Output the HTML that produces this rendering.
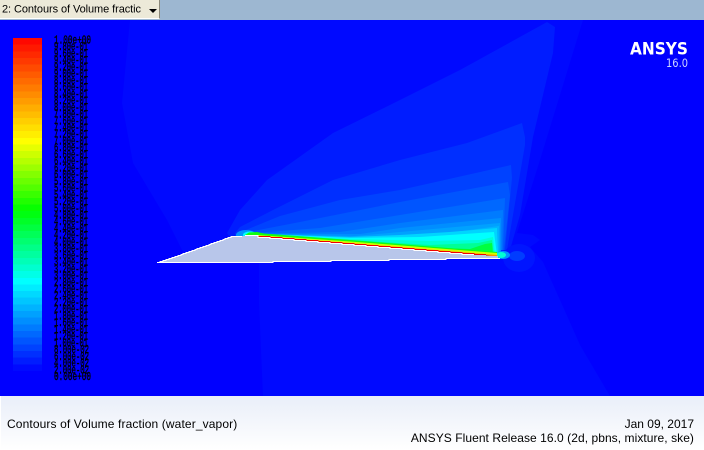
<!DOCTYPE html>
<html><head><meta charset="utf-8"><title>Contours of Volume fraction</title>
<style>
html,body{margin:0;padding:0;background:#00f}
body{width:704px;height:450px;position:relative;overflow:hidden;font-family:"Liberation Sans",sans-serif}
#bar{position:absolute;left:0;top:0;width:704px;height:20px;background:#9db7d1}
#btn{position:absolute;left:0;top:-1px;width:159px;height:19px;background:#ece9d8;border-right:1px solid #8a8778;border-bottom:1px solid #fff}
#btn svg{position:absolute;left:0;top:0}
#arr{position:absolute;left:149px;top:10px;width:0;height:0;border-left:4px solid transparent;border-right:4px solid transparent;border-top:4px solid #000}
#plot{position:absolute;left:0;top:20px}
#foot{position:absolute;left:0;top:396px;width:704px;height:54px;background:linear-gradient(#e9eef9,#fff);border-left:1px solid #fff;box-sizing:border-box;font-size:12px;color:#000}
#foot div{position:absolute;white-space:nowrap}
</style></head><body>
<div id="bar"></div>
<div id="btn"><svg width="145" height="19"><text x="2" y="13.5" font-family="'Liberation Sans',sans-serif" font-size="11" fill="#000" textLength="139" lengthAdjust="spacing">2: Contours of Volume fractic</text></svg><div id="arr"></div></div>
<svg id="plot" width="704" height="376" viewBox="0 20 704 376" xmlns="http://www.w3.org/2000/svg">
<rect x="0" y="20" width="704" height="376" fill="#00f"/>
<g stroke="none">
<polygon fill="hsl(237.8,100%,50%)" points="130,20 122,103 133,163 167,220 182,250 190,262 259,262 259,300 261,350 263,396 610,396 580,345 560,300 543,262 530,247 540,240 533,235 517,233 540,160 583,20"/>
<polygon fill="hsl(233.3,100%,50%)" points="227,233 240,210 267,180 333,133 400,100 460,70 547,22 555,27 553,53 533,137 520,215 510,250 400,260 235,245"/>
<polygon fill="hsl(228.9,100%,50%)" points="235,233 240,227 273,210 333,180 400,160 467,143 522,123 525,137 525,145 513,215 507,250 400,260 235,245"/>
<polygon fill="hsl(224.4,100%,50%)" points="236,234 280,216 340,200 400,190 511,165 512,178 505,250 400,260 236,245"/>
<polygon fill="hsl(220,100%,50%)" points="238,234 300,222 400,202 508,182 510,195 504,250 400,260 238,245"/>
<polygon fill="hsl(215.5,100%,50%)" points="240,234 320,228 400,215 505,198 503,250 400,260 240,245"/>
<polygon fill="hsl(211.1,100%,50%)" points="245,234 340,232 400,223 503,210 502,250 400,260 245,245"/>
<polygon fill="hsl(206.6,100%,50%)" points="250,234 360,234 400,228 501,218 501,252 400,260 250,245"/>
<polygon fill="hsl(202.2,100%,50%)" points="252,234 355,236 400,232 500,223 500,252 400,260 252,245"/>
<polygon fill="hsl(197.8,100%,50%)" points="254,234 370,238 440,234 499,226 499,253 400,260 254,245"/>
<polygon fill="hsl(190,100%,50%)" points="258,234 350,237 400,235 450,232 497,228 498,254 400,260 258,245"/>
<polygon fill="hsl(180,100%,50%)" points="262,234 350,238 420,237 494,232 497,255 400,260 262,245"/>
<polygon fill="hsl(170,100%,50%)" points="262,235 350,239 430,241 480,240 493,237 495,255 400,260 262,245"/>
<polygon fill="hsl(155,100%,50%)" points="265,235 350,240 430,245 478,243 492,240 494,255 400,260 265,245"/>
<polygon fill="hsl(135,100%,50%)" points="270,236 350,241 425,247.5 470,249 485,244 492,243 493,255 400,260 270,245"/>
<ellipse cx="519" cy="258" rx="16" ry="14" fill="hsl(235,100%,50%)"/>
<ellipse cx="517" cy="256" rx="8" ry="5" fill="hsl(226,100%,50%)"/>
<ellipse cx="503" cy="255" rx="7" ry="4" fill="hsl(205,100%,50%)"/>
<ellipse cx="501" cy="255" rx="5" ry="3" fill="hsl(170,100%,50%)"/>
<ellipse cx="246" cy="235" rx="10" ry="5" fill="hsl(205,100%,50%)"/>
<ellipse cx="250" cy="235" rx="7" ry="3.5" fill="hsl(180,100%,50%)"/>
<polygon fill="#10ff10" points="245,235 249,232.5 257,232 264,233.5 350,240 497,252 497,256 258,238"/>
<polygon fill="#d0ff00" points="258,235 350,241.5 497,253 497,256 258,238"/>
<polygon fill="#ff9000" points="258,236 350,243 497,255 497,256.5 258,238"/>
</g>
<path fill="#b8c6ea" shape-rendering="crispEdges" d="M157 262h3v-1h3v-1h3v-1h3v-1h3v-1h3v-1h3v-1h3v-1h2v-1h3v-1h3v-1h3v-1h3v-1h2v-1h3v-1h3v-1h3v-1h3v-1h2v-1h3v-1h3v-1h3v-1h3v-1h2v-1h3v-1h3v-1h11V236H258V237h12v1h12v1h12v1h12v1h12v1h12v1h12v1h12v1h12v1h12v1h12v1h12v1h12v1h12v1h12v1h12v1h12v1h12v1h12v1h12V258H446V259H389V260H331V261H273V262Z"/>
<g fill="none" shape-rendering="crispEdges">
<path stroke="#f00000" stroke-width="1" d="M258 236.5h12v1h12v1h12v1h12v1h12v1h12v1h12v1h12v1h12v1h12v1h12v1h12v1h12v1h12v1h12v1h12v1h12v1h12v1h12"/>
<path stroke="#fff" stroke-width="1" d="M245 235.5h13v2h12v1h12v1h12v1h12v1h12v1h12v1h12v1h12v1h12v1h12v1h12v1h12v1h12v1h12v1h12v1h12v1h12v1h12"/>
<path stroke="#fff" stroke-width="1" d="M157 262.5h3v-1h3v-1h3v-1h3v-1h3v-1h3v-1h3v-1h3v-1h2v-1h3v-1h3v-1h3v-1h3v-1h2v-1h3v-1h3v-1h3v-1h3v-1h2v-1h3v-1h3v-1h3v-1h3v-1h2v-1h3v-1h3v-1h11"/>
<path stroke="#fff" stroke-width="1" d="M157 262.5h116v-1h58v-1h58v-1h57v-1h54"/>
</g>
<g shape-rendering="crispEdges">
<rect x="13" y="38" width="29" height="7" fill="hsl(1.9,100%,50%)"/>
<rect x="13" y="44.66" width="29" height="7" fill="hsl(5.8,100%,50%)"/>
<rect x="13" y="51.32" width="29" height="7" fill="hsl(9.7,100%,50%)"/>
<rect x="13" y="57.98" width="29" height="7" fill="hsl(13.5,100%,50%)"/>
<rect x="13" y="64.64" width="29" height="7" fill="hsl(17.4,100%,50%)"/>
<rect x="13" y="71.3" width="29" height="7" fill="hsl(21.3,100%,50%)"/>
<rect x="13" y="77.96" width="29" height="7" fill="hsl(25.2,100%,50%)"/>
<rect x="13" y="84.62" width="29" height="7" fill="hsl(29,100%,50%)"/>
<rect x="13" y="91.28" width="29" height="7" fill="hsl(32.9,100%,50%)"/>
<rect x="13" y="97.94" width="29" height="7" fill="hsl(36.8,100%,50%)"/>
<rect x="13" y="104.6" width="29" height="7" fill="hsl(40.6,100%,50%)"/>
<rect x="13" y="111.26" width="29" height="7" fill="hsl(44.5,100%,50%)"/>
<rect x="13" y="117.92" width="29" height="7" fill="hsl(48.4,100%,50%)"/>
<rect x="13" y="124.58" width="29" height="7" fill="hsl(52.3,100%,50%)"/>
<rect x="13" y="131.24" width="29" height="7" fill="hsl(56.1,100%,50%)"/>
<rect x="13" y="137.9" width="29" height="7" fill="hsl(60,100%,50%)"/>
<rect x="13" y="144.56" width="29" height="7" fill="hsl(65.8,100%,50%)"/>
<rect x="13" y="151.22" width="29" height="7" fill="hsl(71.7,100%,50%)"/>
<rect x="13" y="157.88" width="29" height="7" fill="hsl(77.5,100%,50%)"/>
<rect x="13" y="164.54" width="29" height="7" fill="hsl(83.3,100%,50%)"/>
<rect x="13" y="171.2" width="29" height="7" fill="hsl(89.2,100%,50%)"/>
<rect x="13" y="177.86" width="29" height="7" fill="hsl(95,100%,50%)"/>
<rect x="13" y="184.52" width="29" height="7" fill="hsl(100.8,100%,50%)"/>
<rect x="13" y="191.18" width="29" height="7" fill="hsl(106.7,100%,50%)"/>
<rect x="13" y="197.84" width="29" height="7" fill="hsl(112.5,100%,50%)"/>
<rect x="13" y="204.5" width="29" height="7" fill="hsl(118.4,100%,50%)"/>
<rect x="13" y="211.16" width="29" height="7" fill="hsl(123.9,100%,50%)"/>
<rect x="13" y="217.82" width="29" height="7" fill="hsl(129.5,100%,50%)"/>
<rect x="13" y="224.48" width="29" height="7" fill="hsl(135.1,100%,50%)"/>
<rect x="13" y="231.14" width="29" height="7" fill="hsl(140.7,100%,50%)"/>
<rect x="13" y="237.8" width="29" height="7" fill="hsl(146.3,100%,50%)"/>
<rect x="13" y="244.46" width="29" height="7" fill="hsl(151.9,100%,50%)"/>
<rect x="13" y="251.12" width="29" height="7" fill="hsl(157.5,100%,50%)"/>
<rect x="13" y="257.78" width="29" height="7" fill="hsl(163.1,100%,50%)"/>
<rect x="13" y="264.44" width="29" height="7" fill="hsl(168.7,100%,50%)"/>
<rect x="13" y="271.1" width="29" height="7" fill="hsl(174.3,100%,50%)"/>
<rect x="13" y="277.76" width="29" height="7" fill="hsl(179.9,100%,50%)"/>
<rect x="13" y="284.42" width="29" height="7" fill="hsl(184.4,100%,50%)"/>
<rect x="13" y="291.08" width="29" height="7" fill="hsl(188.9,100%,50%)"/>
<rect x="13" y="297.74" width="29" height="7" fill="hsl(193.3,100%,50%)"/>
<rect x="13" y="304.4" width="29" height="7" fill="hsl(197.8,100%,50%)"/>
<rect x="13" y="311.06" width="29" height="7" fill="hsl(202.2,100%,50%)"/>
<rect x="13" y="317.72" width="29" height="7" fill="hsl(206.6,100%,50%)"/>
<rect x="13" y="324.38" width="29" height="7" fill="hsl(211.1,100%,50%)"/>
<rect x="13" y="331.04" width="29" height="7" fill="hsl(215.5,100%,50%)"/>
<rect x="13" y="337.7" width="29" height="7" fill="hsl(220,100%,50%)"/>
<rect x="13" y="344.36" width="29" height="7" fill="hsl(224.4,100%,50%)"/>
<rect x="13" y="351.02" width="29" height="7" fill="hsl(228.9,100%,50%)"/>
<rect x="13" y="357.68" width="29" height="7" fill="hsl(233.3,100%,50%)"/>
<rect x="13" y="364.34" width="29" height="6.7" fill="hsl(237.8,100%,50%)"/>
</g>
<g font-family="'Liberation Mono',monospace" font-size="11.5" fill="#000" stroke="#000" stroke-width=".4">
<text x="54" y="43.5" textLength="37" lengthAdjust="spacingAndGlyphs">1.00e+00</text>
<text x="54" y="50.2" textLength="34" lengthAdjust="spacingAndGlyphs">9.80e-01</text>
<text x="54" y="57" textLength="34" lengthAdjust="spacingAndGlyphs">9.60e-01</text>
<text x="54" y="63.7" textLength="34" lengthAdjust="spacingAndGlyphs">9.40e-01</text>
<text x="54" y="70.4" textLength="34" lengthAdjust="spacingAndGlyphs">9.20e-01</text>
<text x="54" y="77.2" textLength="34" lengthAdjust="spacingAndGlyphs">9.00e-01</text>
<text x="54" y="83.9" textLength="34" lengthAdjust="spacingAndGlyphs">8.80e-01</text>
<text x="54" y="90.6" textLength="34" lengthAdjust="spacingAndGlyphs">8.60e-01</text>
<text x="54" y="97.3" textLength="34" lengthAdjust="spacingAndGlyphs">8.40e-01</text>
<text x="54" y="104.1" textLength="34" lengthAdjust="spacingAndGlyphs">8.20e-01</text>
<text x="54" y="110.8" textLength="34" lengthAdjust="spacingAndGlyphs">8.00e-01</text>
<text x="54" y="117.5" textLength="34" lengthAdjust="spacingAndGlyphs">7.80e-01</text>
<text x="54" y="124.3" textLength="34" lengthAdjust="spacingAndGlyphs">7.60e-01</text>
<text x="54" y="131" textLength="34" lengthAdjust="spacingAndGlyphs">7.40e-01</text>
<text x="54" y="137.7" textLength="34" lengthAdjust="spacingAndGlyphs">7.20e-01</text>
<text x="54" y="144.5" textLength="34" lengthAdjust="spacingAndGlyphs">7.00e-01</text>
<text x="54" y="151.2" textLength="34" lengthAdjust="spacingAndGlyphs">6.80e-01</text>
<text x="54" y="157.9" textLength="34" lengthAdjust="spacingAndGlyphs">6.60e-01</text>
<text x="54" y="164.6" textLength="34" lengthAdjust="spacingAndGlyphs">6.40e-01</text>
<text x="54" y="171.4" textLength="34" lengthAdjust="spacingAndGlyphs">6.20e-01</text>
<text x="54" y="178.1" textLength="34" lengthAdjust="spacingAndGlyphs">6.00e-01</text>
<text x="54" y="184.8" textLength="34" lengthAdjust="spacingAndGlyphs">5.80e-01</text>
<text x="54" y="191.6" textLength="34" lengthAdjust="spacingAndGlyphs">5.60e-01</text>
<text x="54" y="198.3" textLength="34" lengthAdjust="spacingAndGlyphs">5.40e-01</text>
<text x="54" y="205" textLength="34" lengthAdjust="spacingAndGlyphs">5.20e-01</text>
<text x="54" y="211.8" textLength="34" lengthAdjust="spacingAndGlyphs">5.00e-01</text>
<text x="54" y="218.5" textLength="34" lengthAdjust="spacingAndGlyphs">4.80e-01</text>
<text x="54" y="225.2" textLength="34" lengthAdjust="spacingAndGlyphs">4.60e-01</text>
<text x="54" y="231.9" textLength="34" lengthAdjust="spacingAndGlyphs">4.40e-01</text>
<text x="54" y="238.7" textLength="34" lengthAdjust="spacingAndGlyphs">4.20e-01</text>
<text x="54" y="245.4" textLength="34" lengthAdjust="spacingAndGlyphs">4.00e-01</text>
<text x="54" y="252.1" textLength="34" lengthAdjust="spacingAndGlyphs">3.80e-01</text>
<text x="54" y="258.9" textLength="34" lengthAdjust="spacingAndGlyphs">3.60e-01</text>
<text x="54" y="265.6" textLength="34" lengthAdjust="spacingAndGlyphs">3.40e-01</text>
<text x="54" y="272.3" textLength="34" lengthAdjust="spacingAndGlyphs">3.20e-01</text>
<text x="54" y="279" textLength="34" lengthAdjust="spacingAndGlyphs">3.00e-01</text>
<text x="54" y="285.8" textLength="34" lengthAdjust="spacingAndGlyphs">2.80e-01</text>
<text x="54" y="292.5" textLength="34" lengthAdjust="spacingAndGlyphs">2.60e-01</text>
<text x="54" y="299.2" textLength="34" lengthAdjust="spacingAndGlyphs">2.40e-01</text>
<text x="54" y="306" textLength="34" lengthAdjust="spacingAndGlyphs">2.20e-01</text>
<text x="54" y="312.7" textLength="34" lengthAdjust="spacingAndGlyphs">2.00e-01</text>
<text x="54" y="319.4" textLength="34" lengthAdjust="spacingAndGlyphs">1.80e-01</text>
<text x="54" y="326.2" textLength="34" lengthAdjust="spacingAndGlyphs">1.60e-01</text>
<text x="54" y="332.9" textLength="34" lengthAdjust="spacingAndGlyphs">1.40e-01</text>
<text x="54" y="339.6" textLength="34" lengthAdjust="spacingAndGlyphs">1.20e-01</text>
<text x="54" y="346.3" textLength="34" lengthAdjust="spacingAndGlyphs">1.00e-01</text>
<text x="54" y="353.1" textLength="35" lengthAdjust="spacingAndGlyphs">8.00e-02</text>
<text x="54" y="359.8" textLength="35" lengthAdjust="spacingAndGlyphs">6.00e-02</text>
<text x="54" y="366.5" textLength="35" lengthAdjust="spacingAndGlyphs">4.00e-02</text>
<text x="54" y="373.3" textLength="35" lengthAdjust="spacingAndGlyphs">2.00e-02</text>
<text x="54" y="380" textLength="37" lengthAdjust="spacingAndGlyphs">0.00e+00</text>
</g>
<text x="630" y="54.5" font-family="'DejaVu Sans',sans-serif" font-weight="bold" font-size="17" fill="#fff" textLength="58" lengthAdjust="spacingAndGlyphs">ANSYS</text>
<text x="666" y="67" font-family="'DejaVu Sans',sans-serif" font-size="11.5" fill="#cfd6ff" textLength="22" lengthAdjust="spacingAndGlyphs">16.0</text>
</svg>
<div id="foot">
<div style="left:6px;top:21px;line-height:14px;letter-spacing:.12px">Contours of Volume fraction (water_vapor)</div>
<div style="right:10px;top:21px;line-height:14px">Jan 09, 2017</div>
<div style="right:10px;top:35px;line-height:14px;letter-spacing:.06px">ANSYS Fluent Release 16.0 (2d, pbns, mixture, ske)</div>
</div>
</body></html>
